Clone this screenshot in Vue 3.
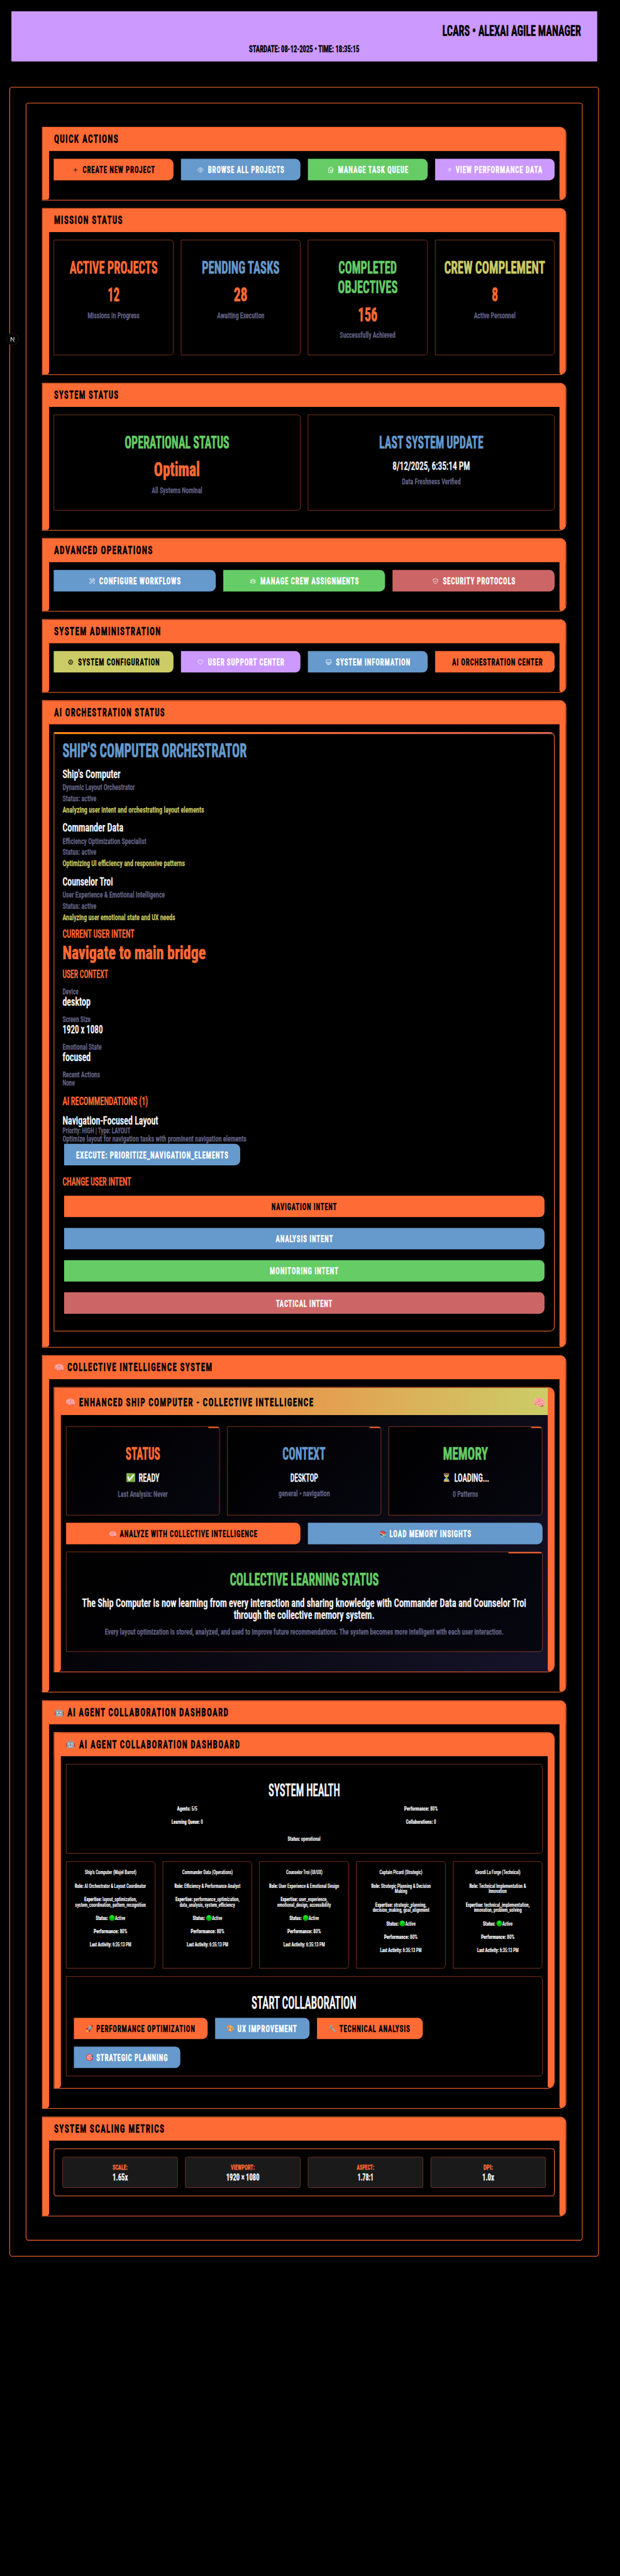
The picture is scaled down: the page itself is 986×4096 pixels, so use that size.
<script setup>
const vFit = {
  mounted(el, { value }) {
    const natural = el.offsetWidth
    const spacing = parseFloat(getComputedStyle(el).letterSpacing) || 0
    const k = value / (natural - spacing)
    el.style.transform = `scaleX(${k})`
    el.style.marginRight = `${value - natural}px`
  }
}

const icons = {
  plus: 'M12 4.5v15m7.5-7.5h-15',
  eye: 'M2 12C3.4 7.5 7.4 4.5 12 4.5s8.6 3 10 7.5c-1.4 4.500-5.400 7.500-10 7.500S3.400 16.500 2 12zM15 12a3 3 0 11-6 0 3 3 0 016 0z',
  clipboard: 'M9 12h7M9 15.500h7M9 19h7M6 12h.1M6 15.500h.1M6 19h.1M8 5h-2.500C4.500 5 4 5.600 4 6.500V21c0 1 .6 1.500 1.500 1.500h11c1 0 1.500-.6 1.500-1.500V8M8 8V4.500C8 3 9 1.500 11 1.500h2c2 0 3 1.500 3 3h2.500C20 4.500 20.500 5 20.500 6.500V17c0 1-.8 1.500-2.500 1.500',
  pie: 'M10.500 6a7.500 7.500 0 107.500 7.500h-7.500V6zM13.500 10.500H21A7.500 7.500 0 0013.500 3v7.500z',
  tools: 'M11.400 15.200L17.200 21A2.600 2.600 0 0021 17.200l-5.900-5.900M11.400 15.200l2.500-3c.3-.4.700-.7 1.200-.9M11.400 15.200L6.800 20.800a2.500 2.500 0 11-3.600-3.600l6.900-5.600M15.100 11.300c2 .2 4.200-.2 5.600-1.700 1.300-1.300 1.500-3.200 1-4.600L18.400 8.200 15.800 5.600 19 2.300c-1.400-.5-3.300-.3-4.600 1-1.500 1.500-1.700 3.300-1.400 5M10.100 11.600L5.900 7.400H4.500L2.300 3.700l1.500-1.500L7.500 4.500v1.400L11.700 10',
  users: 'M15 6.800a3 3 0 11-6 0 3 3 0 016 0zM21 9.800a2.200 2.200 0 11-4.500 0 2.200 2.200 0 014.500 0zM7.500 9.800a2.200 2.200 0 11-4.500 0 2.200 2.200 0 014.500 0zM6 18.700a6 6 0 0112 0c-3.500 2.500-8.500 2.500-12 0zM18 18.700c1.500 0 3-.2 4.200-.9-.2-3-3-4.500-5.500-3.300M6 18.700c-1.500 0-3-.2-4.200-.9.2-3 3-4.500 5.500-3.300',
  shield: 'M9 12.800L11.300 15 15 9.800M12 2.700A12 12 0 013.600 6C2.500 13 5.500 19 12 21.800 18.500 19 21.500 13 20.400 6A12 12 0 0112 2.700z',
  cog: 'M19 12a7 7 0 11-14 0 7 7 0 0114 0zM12 2v3M12 19v3M2 12h3M12 12h10M5 5l2 2M17 17l2 2M19 5l-2 2M7 17l-2 2M12 12L8.500 6M12 12l-3.500 6M8.300 2.700l1 2.500M15.700 2.700l-1 2.500M8.300 21.300l1-2.500M15.700 21.300l-1-2.500',
  heart: 'M21 8.300C21 5.700 18.900 3.700 16.300 3.700c-1.900 0-3.600 1.100-4.300 2.700-.7-1.600-2.400-2.700-4.300-2.700C5.100 3.700 3 5.700 3 8.300c0 7.200 9 12 9 12s9-4.800 9-12z',
  monitor: 'M9 17.300v1c0 .8-.3 1.600-.9 2.100L7.500 21h9l-.6-.6c-.6-.5-.9-1.300-.9-2.100v-1M3 5.300C3 4 4 3 5.300 3h13.400C20 3 21 4 21 5.300V15c0 1.300-1 2.300-2.300 2.300H5.300C4 17.300 3 16.300 3 15V5.300zM3 12.500h18',
  dot: 'M10 12h4'
}

const quick = [
  { t: 'CREATE NEW PROJECT', w: 222, c: 'orange', i: 'plus' },
  { t: 'BROWSE ALL PROJECTS', w: 234, c: 'blue', i: 'eye' },
  { t: 'MANAGE TASK QUEUE', w: 215, c: 'green', i: 'clipboard' },
  { t: 'VIEW PERFORMANCE DATA', w: 266, c: 'violet', i: 'pie', s: 'mid' }
]
const advanced = [
  { t: 'CONFIGURE WORKFLOWS', w: 250, c: 'blue', i: 'tools' },
  { t: 'MANAGE CREW ASSIGNMENTS', w: 302, c: 'green', i: 'users' },
  { t: 'SECURITY PROTOCOLS', w: 222, c: 'red', i: 'shield' }
]
const admin = [
  { t: 'SYSTEM CONFIGURATION', w: 250, c: 'yellow', i: 'cog' },
  { t: 'USER SUPPORT CENTER', w: 234, c: 'violet', i: 'heart' },
  { t: 'SYSTEM INFORMATION', w: 228, c: 'blue', i: 'monitor' },
  { t: 'AI ORCHESTRATION CENTER', w: 278, c: 'orange', i: 'dot', s: 'tiny' }
]
const missions = [
  { t: [['ACTIVE PROJECTS', 270]], c: 'c-orange', n: '12', nw: 36.5, s: 'Missions in Progress', sw: 160 },
  { t: [['PENDING TASKS', 239]], c: 'c-blue', n: '28', nw: 42.5, s: 'Awaiting Execution', sw: 145 },
  { t: [['COMPLETED', 179], ['OBJECTIVES', 183.5]], c: 'c-green', n: '156', nw: 59.5, s: 'Successfully Achieved', sw: 171 },
  { t: [['CREW COMPLEMENT', 310]], c: 'c-yellow', n: '8', nw: 19.5, s: 'Active Personnel', sw: 128 }
]
const officers = [
  { n: "Ship's Computer", nw: 178, r: 'Dynamic Layout Orchestrator', rw: 222, a: 'Analyzing user intent and orchestrating layout elements', aw: 435.6 },
  { n: 'Commander Data', nw: 187, r: 'Efficiency Optimization Specialist', rw: 257.7, a: 'Optimizing UI efficiency and responsive patterns', aw: 375.7 },
  { n: 'Counselor Troi', nw: 155, r: 'User Experience & Emotional Intelligence', rw: 315, a: 'Analyzing user emotional state and UX needs', aw: 346.3 }
]
const context = [
  ['Device', 49, 'desktop', 86],
  ['Screen Size', 86, '1920 x 1080', 124],
  ['Emotional State', 120, 'focused', 86.7]
]
const intents = [
  ['NAVIGATION INTENT', 200.6, 'orange'],
  ['ANALYSIS INTENT', 175.6, 'blue'],
  ['MONITORING INTENT', 210, 'green'],
  ['TACTICAL INTENT', 172.4, 'red']
]
const memory = [
  { t: 'STATUS', w: 106, c: 'c-orange', e: '✅', v: 'READY', vw: 64, s: 'Last Analysis: Never', sw: 153 },
  { t: 'CONTEXT', w: 132, c: 'c-blue', e: '', v: 'DESKTOP', vw: 85.6, s: 'general • navigation', sw: 158 },
  { t: 'MEMORY', w: 138, c: 'c-green', e: '⏳', v: 'LOADING...', vw: 107, s: '0 Patterns', sw: 78 }
]
const health = [
  ['Agents:', '5/5', 62], ['Performance:', '80%', 103],
  ['Learning Queue:', '0', 96.5], ['Collaborations:', '0', 93]
]
const agents = [
  { n: "Ship's Computer (Majel Barrot)", nw: 158, r: [['AI Orchestrator & Layout Coordinator', 219]], x: [['layout_optimization,', 161.5], ['system_coordination, pattern_recognition', 217]] },
  { n: 'Commander Data (Operations)', nw: 155, r: [['Efficiency & Performance Analyst', 202.7]], x: [['performance_optimization,', 197], ['data_analysis, system_efficiency', 170]] },
  { n: 'Counselor Troi (UI/UX)', nw: 112, r: [['User Experience & Emotional Design', 214.7]], x: [['user_experience,', 144], ['emotional_design, accessibility', 165]] },
  { n: 'Captain Picard (Strategic)', nw: 132, r: [['Strategic Planning & Decision', 183], ['Making', 38]], x: [['strategic_planning,', 157], ['decision_making, goal_alignment', 174.5]] },
  { n: 'Geordi La Forge (Technical)', nw: 139, r: [['Technical Implementation &', 174.5], ['Innovation', 56]], x: [['technical_implementation,', 196], ['innovation, problem_solving', 147]] }
]
const collab = [
  ['🚀', 'PERFORMANCE OPTIMIZATION', 302.5, 'orange'],
  ['🎨', 'UX IMPROVEMENT', 182, 'blue'],
  ['🔧', 'TECHNICAL ANALYSIS', 216, 'orange'],
  ['🎯', 'STRATEGIC PLANNING', 219, 'blue']
]
const metrics = [
  ['SCALE:', 46, '1.65x', 47],
  ['VIEWPORT:', 74, '1920 × 1080', 102],
  ['ASPECT:', 53.5, '1.78:1', 48.6],
  ['DPI:', 30, '1.0x', 36.5]
]
</script>

<template>
  <div class="viewport">
    <div class="page">
      <header class="banner">
        <h1><span v-fit="426" class="t">LCARS • ALEXAI AGILE MANAGER</span></h1>
        <p><span v-fit="339" class="t">STARDATE: 08-12-2025 • TIME: 18:35:15</span></p>
      </header>

      <div class="badge"><svg viewBox="0 0 38 38"><path d="M14.500 26V12.500L25.500 28M24 12v10" /></svg></div>

      <main class="outer">
        <div class="inner">
          <section class="panel p-quick">
            <h2><span v-fit="197" class="t">QUICK ACTIONS</span></h2>
            <div class="body">
              <div class="cols four">
                <div v-for="b in quick" :key="b.t" class="btn" :class="b.c">
                  <svg class="ico" :class="b.s" viewBox="0 0 24 24"><path :d="icons[b.i]" /></svg>
                  <span v-fit="b.w" class="t">{{ b.t }}</span>
                </div>
              </div>
            </div>
          </section>

          <section class="panel p-mission">
            <h2><span v-fit="210" class="t">MISSION STATUS</span></h2>
            <div class="body">
              <div class="cols four">
                <div v-for="m in missions" :key="m.n" class="card">
                  <h3 :class="m.c"><div v-for="l in m.t" :key="l[0]"><span v-fit="l[1]" class="t">{{ l[0] }}</span></div></h3>
                  <p class="num"><span v-fit="m.nw" class="t">{{ m.n }}</span></p>
                  <p class="sub"><span v-fit="m.sw" class="t">{{ m.s }}</span></p>
                </div>
              </div>
            </div>
          </section>

          <section class="panel p-status">
            <h2><span v-fit="197" class="t">SYSTEM STATUS</span></h2>
            <div class="body">
              <div class="cols two">
                <div class="card">
                  <h3 class="c-green"><span v-fit="322" class="t">OPERATIONAL STATUS</span></h3>
                  <p class="num"><span v-fit="141" class="t">Optimal</span></p>
                  <p class="sub"><span v-fit="155.5" class="t">All Systems Nominal</span></p>
                </div>
                <div class="card">
                  <h3 class="c-blue"><span v-fit="320" class="t">LAST SYSTEM UPDATE</span></h3>
                  <p class="val"><span v-fit="238" class="t">8/12/2025, 6:35:14 PM</span></p>
                  <p class="sub"><span v-fit="180" class="t">Data Freshness Verified</span></p>
                </div>
              </div>
            </div>
          </section>

          <section class="panel p-advanced">
            <h2><span v-fit="302" class="t">ADVANCED OPERATIONS</span></h2>
            <div class="body">
              <div class="cols three">
                <div v-for="b in advanced" :key="b.t" class="btn" :class="b.c">
                  <svg class="ico" viewBox="0 0 24 24"><path :d="icons[b.i]" /></svg>
                  <span v-fit="b.w" class="t">{{ b.t }}</span>
                </div>
              </div>
            </div>
          </section>

          <section class="panel p-admin">
            <h2><span v-fit="327" class="t">SYSTEM ADMINISTRATION</span></h2>
            <div class="body">
              <div class="cols four">
                <div v-for="b in admin" :key="b.t" class="btn" :class="b.c">
                  <svg class="ico" :class="b.s" viewBox="0 0 24 24"><path :d="icons[b.i]" /></svg>
                  <span v-fit="b.w" class="t">{{ b.t }}</span>
                </div>
              </div>
            </div>
          </section>

          <section class="panel p-orch">
            <h2><span v-fit="340" class="t">AI ORCHESTRATION STATUS</span></h2>
            <div class="body">
              <div class="console">
                <div class="stripe"></div>
                <h3 class="lead"><span v-fit="566" class="t">SHIP'S COMPUTER ORCHESTRATOR</span></h3>
                <div v-for="o in officers" :key="o.n" class="officer">
                  <p class="name"><span v-fit="o.nw" class="t">{{ o.n }}</span></p>
                  <p class="dim"><span v-fit="o.rw" class="t">{{ o.r }}</span></p>
                  <p class="dim"><span v-fit="104" class="t">Status: active</span></p>
                  <p class="act"><span v-fit="o.aw" class="t">{{ o.a }}</span></p>
                </div>
                <h4 class="h-intent"><span v-fit="221" class="t">CURRENT USER INTENT</span></h4>
                <p class="intent"><span v-fit="440" class="t">Navigate to main bridge</span></p>
                <h4 class="h-context"><span v-fit="140" class="t">USER CONTEXT</span></h4>
                <div v-for="c in context" :key="c[0]" class="pair">
                  <p class="label"><span v-fit="c[1]" class="t">{{ c[0] }}</span></p>
                  <p class="value"><span v-fit="c[3]" class="t">{{ c[2] }}</span></p>
                </div>
                <div class="pair">
                  <p class="label"><span v-fit="115" class="t">Recent Actions</span></p>
                  <p class="label"><span v-fit="37.6" class="t">None</span></p>
                </div>
                <h4 class="h-rec"><span v-fit="263" class="t">AI RECOMMENDATIONS (1)</span></h4>
                <p class="rec"><span v-fit="294" class="t">Navigation-Focused Layout</span></p>
                <p class="label"><span v-fit="209" class="t">Priority: HIGH | Type: LAYOUT</span></p>
                <p class="label"><span v-fit="565" class="t">Optimize layout for navigation tasks with prominent navigation elements</span></p>
                <div class="btn blue execute"><span v-fit="467" class="t">EXECUTE: PRIORITIZE_NAVIGATION_ELEMENTS</span></div>
                <h4 class="h-change"><span v-fit="211" class="t">CHANGE USER INTENT</span></h4>
                <div class="intents">
                  <div v-for="b in intents" :key="b[0]" class="btn" :class="b[2]"><span v-fit="b[1]" class="t">{{ b[0] }}</span></div>
                </div>
              </div>
            </div>
          </section>

          <section class="panel p-collective">
            <h2><span class="emo">🧠</span><span v-fit="444.5" class="t">COLLECTIVE INTELLIGENCE SYSTEM</span></h2>
            <div class="body">
              <section class="panel nested p-enhanced">
                <h2><span class="emo">🧠</span><span v-fit="719" class="t">ENHANCED SHIP COMPUTER - COLLECTIVE INTELLIGENCE</span><span class="emo big">🧠</span></h2>
                <div class="body">
                  <div class="cols three">
                    <div v-for="m in memory" :key="m.t" class="card">
                      <i class="tab"></i>
                      <h3 :class="m.c"><span v-fit="m.w" class="t">{{ m.t }}</span></h3>
                      <p class="val"><span v-if="m.e" class="emo">{{ m.e }}</span><span v-fit="m.vw" class="t">{{ m.v }}</span></p>
                      <p class="sub"><span v-fit="m.sw" class="t">{{ m.s }}</span></p>
                    </div>
                  </div>
                  <div class="cols two">
                    <div class="btn orange"><span class="emo">🧠</span><span v-fit="422" class="t">ANALYZE WITH COLLECTIVE INTELLIGENCE</span></div>
                    <div class="btn blue"><span class="emo">📚</span><span v-fit="250.5" class="t">LOAD MEMORY INSIGHTS</span></div>
                  </div>
                  <div class="card learning">
                    <i class="tab"></i>
                    <h3 class="c-green"><span v-fit="457.5" class="t">COLLECTIVE LEARNING STATUS</span></h3>
                    <p class="val"><span v-fit="1365" class="t">The Ship Computer is now learning from every interaction and sharing knowledge with Commander Data and Counselor Troi</span></p>
                    <p class="val"><span v-fit="432.6" class="t">through the collective memory system.</span></p>
                    <p class="sub"><span v-fit="1225" class="t">Every layout optimization is stored, analyzed, and used to improve future recommendations. The system becomes more intelligent with each user interaction.</span></p>
                  </div>
                </div>
              </section>
            </div>
          </section>

          <section class="panel p-agents">
            <h2><span class="emo">🤖</span><span v-fit="494" class="t">AI AGENT COLLABORATION DASHBOARD</span></h2>
            <div class="body">
              <section class="panel nested p-dash">
                <h2><span class="emo">🤖</span><span v-fit="493" class="t">AI AGENT COLLABORATION DASHBOARD</span></h2>
                <div class="body">
                  <div class="card health">
                    <h3><span v-fit="220" class="t">SYSTEM HEALTH</span></h3>
                    <div class="health-grid">
                      <p v-for="h in health" :key="h[0]" class="tiny-text"><span v-fit="h[2]" class="t"><b>{{ h[0] }}</b> {{ h[1] }}</span></p>
                    </div>
                    <p class="tiny-text state"><span v-fit="101" class="t"><b>Status:</b> operational</span></p>
                  </div>
                  <div class="cols five">
                    <div v-for="a in agents" :key="a.n" class="card agent">
                      <p><span v-fit="a.nw" class="t">{{ a.n }}</span></p>
                      <div class="para"><p v-for="(l, i) in a.r" :key="i"><span v-fit="l[1]" class="t"><b v-if="i === 0">Role: </b>{{ l[0] }}</span></p></div>
                      <div class="para"><p v-for="(l, i) in a.x" :key="i"><span v-fit="l[1]" class="t"><b v-if="i === 0">Expertise: </b>{{ l[0] }}</span></p></div>
                      <p class="line"><span v-fit="38" class="t"><b>Status:</b></span><i class="led"></i><span v-fit="31.5" class="t">Active</span></p>
                      <p><span v-fit="103" class="t"><b>Performance:</b> 80%</span></p>
                      <p><span v-fit="127" class="t"><b>Last Activity:</b> 6:35:13 PM</span></p>
                    </div>
                  </div>
                  <div class="card start">
                    <h3><span v-fit="322" class="t">START COLLABORATION</span></h3>
                    <div class="collab">
                      <div v-for="b in collab" :key="b[1]" class="btn" :class="b[3]"><span class="emo">{{ b[0] }}</span><span v-fit="b[2]" class="t">{{ b[1] }}</span></div>
                    </div>
                  </div>
                </div>
              </section>
            </div>
          </section>

          <section class="panel p-metrics">
            <h2><span v-fit="338" class="t">SYSTEM SCALING METRICS</span></h2>
            <div class="body">
              <div class="metrics">
                <div v-for="m in metrics" :key="m[0]" class="metric">
                  <p class="m-label"><span v-fit="m[1]" class="t">{{ m[0] }}</span></p>
                  <p class="m-value"><span v-fit="m[3]" class="t">{{ m[2] }}</span></p>
                </div>
              </div>
            </div>
          </section>
        </div>
      </main>
    </div>
  </div>
</template>

<style>
html, body { background: #000; margin: 0; overflow: hidden; }
</style>

<style scoped>
* { box-sizing: border-box; }
.viewport { width: 986px; height: 4096px; overflow: hidden; background: #000; }
.page {
  position: relative; width: 1905px; height: 7913px; padding: 35px 65px 0 29px;
  transform: scale(0.5176); transform-origin: 0 0;
  font-family: Roboto, "Liberation Sans", sans-serif; font-stretch: 75%; color: #f5f6fa; background: #000;
}
h1, h2, h3, h4, p { margin: 0; font-weight: 700; }
.t { display: inline-block; vertical-align: top; white-space: nowrap; transform-origin: 0 50%; -webkit-text-stroke: 0.022em currentColor; }
.emo { display: inline-block; font-family: "Noto Color Emoji", sans-serif; line-height: 1; white-space: nowrap; letter-spacing: 0; font-weight: 400; flex: none; }

.banner { margin: 0 0 0 6px; width: 1800px; height: 153.500px; background: #c9f; border-radius: 2px; color: #000; padding: 30px 50px 0; }
.banner h1 { font-size: 44.500px; line-height: 60px; text-align: right; }
.banner p { font-size: 30px; line-height: 40px; text-align: center; margin-top: 5.500px; }

.badge { position: absolute; left: 19px; top: 1023px; width: 38px; height: 38px; border-radius: 50%; background: #050505; border: 1.500px solid #2c2c2c; }
.badge svg { display: block; width: 100%; height: 100%; fill: none; stroke: #fff; stroke-width: 2; }

.outer { margin-top: 78px; width: 1811px; height: 6665.500px; border: 2px solid #ff6b35; border-radius: 8px; padding: 47.500px 48px 0; }
.inner { width: 1711px; height: 6566.500px; border: 2px solid #ff6b35; border-radius: 8px; padding: 72px 48px 0; display: flex; flex-direction: column; gap: 23.600px; }

.panel { position: relative; flex: none; border: 2.500px solid #ff6b35; border-radius: 0 20px 20px 0; overflow: hidden; background: #000; }
.panel > h2 { position: relative; height: 72px; background: #ff6b35; color: #000; padding-left: 35px; padding-bottom: 2px; display: flex; align-items: center; gap: 11px; font-size: 36px; line-height: 42px; letter-spacing: 0.1em; }
.panel > h2 .emo { font-size: 25px; width: 30px; }
.panel > .body { padding: 24px 34px 0; }
.panel::before, .panel::after { content: ""; position: absolute; top: 0; bottom: 0; width: 19.500px; background: #ff6b35; }
.panel::before { left: 0; border-radius: 0 0 8px 0; }
.panel::after { right: 0; border-radius: 0 0 20px 12px; }
.p-quick { height: 225.500px; }
.p-mission { height: 513.400px; }
.p-status { height: 453.600px; }
.p-advanced { height: 225.500px; }
.p-admin { height: 225.500px; }
.p-orch { height: 1988.300px; }
.p-collective { height: 1036px; }
.p-agents { height: 1255.400px; }
.p-metrics { height: 307px; }

.cols { display: grid; gap: 23px; }
.two { grid-template-columns: repeat(2, 1fr); }
.three { grid-template-columns: repeat(3, 1fr); }
.four { grid-template-columns: repeat(4, 1fr); }
.five { grid-template-columns: repeat(5, 1fr); }

.btn { height: 65.500px; border-radius: 0 16px 16px 0; display: flex; align-items: center; justify-content: center; gap: 12.500px; font-size: 29px; font-weight: 700; line-height: 40px; letter-spacing: 0.08em; color: #fff; padding-top: 2px; }
.btn .emo { font-size: 20px; width: 24px; }
.orange { background: #ff6b35; color: #000; }
.blue { background: #69c; }
.green { background: #6c6; }
.violet { background: #c9f; }
.red { background: #c66; }
.yellow { background: #cc6; color: #000; }
.ico { width: 20px; height: 20px; flex: none; fill: none; stroke: currentColor; stroke-width: 1.800; }
.ico.mid { width: 13px; height: 13px; }
.ico.tiny { width: 3px; height: 3px; }
.c-orange { color: #ff6b35; }
.c-blue { color: #69c; }
.c-green { color: #6c6; }
.c-yellow { color: #cc6; }

.card { position: relative; border: 1.500px solid #e86231; border-radius: 0 9px 9px 0; text-align: center; padding-top: 54px; }
.card h3 { font-size: 53px; line-height: 61px; }
.num { color: #ff6b35; font-size: 59px; line-height: 64px; margin-top: 21px; }
.val { font-size: 37px; line-height: 36px; margin: 23px 0 5px; display: flex; justify-content: center; gap: 7px; font-weight: 500; }
.val .emo { font-size: 25px; line-height: 38px; }
.sub { color: #668; font-size: 25px; line-height: 30px; margin-top: 16px; font-weight: 500; }
.p-mission .card { height: 354px; }
.p-status .card { height: 294px; }

.console { height: 1841px; border: 2px solid #ff6b35; border-radius: 0 14px 14px 0; padding: 0 24.500px; overflow: hidden; }
.stripe { height: 4px; margin: 0 -24.500px 20.500px; background: linear-gradient(90deg, #f90, #ff6b35 50%, #c66); }
.lead { color: #69c; font-size: 60px; line-height: 62px; margin-bottom: 17px; }
.officer { margin-bottom: 15.800px; }
.officer p { font-size: 25.500px; line-height: 34.800px; height: 34.800px; font-weight: 500; }
.officer .name { font-size: 37px; line-height: 45.200px; height: 45.200px; }
.dim { color: #668; }
.act { color: #cc6; }
h4 { color: #ff6b35; font-size: 36px; line-height: 42px; font-weight: 500; }
.h-intent { margin-top: -3px; }
.intent { color: #ff6b35; font-size: 57.500px; line-height: 60px; margin-top: 6.800px; }
.h-context { margin: 14.300px 0 20.300px; }
.pair { margin-bottom: 21px; }
.label { color: #668; font-size: 24.500px; line-height: 26px; height: 26px; font-weight: 500; }
.value { font-size: 36px; line-height: 38px; height: 38px; font-weight: 500; }
.h-rec { margin-bottom: 20.500px; }
.rec { font-size: 36px; line-height: 36px; height: 36px; font-weight: 500; }
.execute { width: 541.500px; margin: 2.500px 0 0 5px; }
.h-change { margin: 29px 0 22.500px; }
.intents { display: flex; flex-direction: column; gap: 33.400px; padding: 0 5px; }

.nested { height: 875.500px; }
.nested > .body { padding: 35px 35.500px 0; }
.p-enhanced > h2 { height: 84px; padding-bottom: 0; padding-top: 5px; background: linear-gradient(90deg, #ff6b35 2%, #cc6 98%); }
.p-enhanced > h2 .big { margin-left: auto; margin-right: 24px; font-size: 33px; width: 40px; }
.p-enhanced { background: linear-gradient(135deg, #000 20%, #16142a); }
.p-enhanced .cols { margin-bottom: 23.500px; }
.p-enhanced .btn { gap: 8px; }
.p-enhanced .card { height: 272.500px; background: linear-gradient(135deg, #000, #06060f); }
.p-enhanced .learning { height: 307px; }
.learning .val { margin: 0; height: 36px; }
.learning h3 { margin-bottom: 23px; }
.learning .sub { margin-top: 21px; }
.tab { position: absolute; top: 0; right: 1px; width: 7%; height: 4px; background: #ff6b35; opacity: 0.9; border-radius: 0 6px 0 0; }

.p-dash { height: 1095px; }
.p-dash > .body { padding-top: 24px; }
.card.health { height: 275.500px; padding-top: 49px; margin-bottom: 23.300px; }
.card.health h3, .card.start h3 { font-weight: 500; }
.tiny-text, .agent { font-size: 16.500px; line-height: 17px; font-weight: 500; }
.health-grid { display: grid; grid-template-columns: 1fr 1fr; gap: 23px 16px; padding: 0 21px; margin-top: 18px; }
.state { margin-top: 36px; }
.agent { height: 329px; padding-top: 25px; }
.agent p { font-weight: 500; }
.agent > * { margin-bottom: 24px; }
.agent > .line { display: flex; justify-content: center; align-items: center; height: 17px; }
.led { width: 18px; height: 18px; border-radius: 50%; margin-left: 3px; background: radial-gradient(circle at 50% 25%, #3e3, #0b0 45%, #090); flex: none; }
.card.start { margin-top: 24px; height: 307px; padding-top: 50px; }
.collab { display: flex; flex-wrap: wrap; gap: 23px; padding: 0 23.500px; margin-top: 16px; }
.collab .btn { padding: 2px 39.500px 0 36px; gap: 9px; }

.metrics { height: 147.500px; border: 2px solid #ff6b35; border-radius: 8px; padding: 24.500px 25px 0; display: grid; grid-template-columns: repeat(4, 1fr); gap: 23px; align-items: start; }
.metric { height: 95px; background: #1a1a1a; border: 1.500px solid #c9552c; border-radius: 6px; text-align: center; padding-top: 15px; }
.m-label { color: #ff6b35; font-size: 22.500px; line-height: 30px; }
.m-value { font-size: 30px; line-height: 32px; }
</style>
